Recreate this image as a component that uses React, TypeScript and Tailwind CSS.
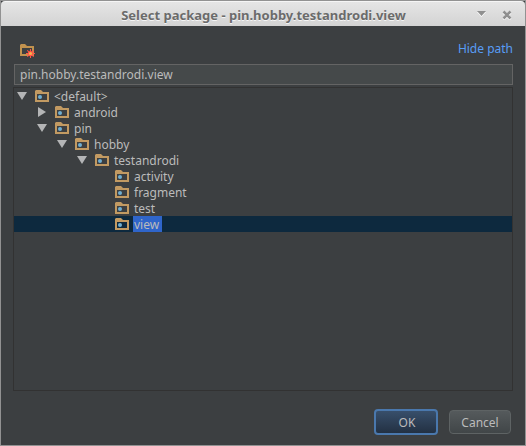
import { useState } from "react";

type PackageNode = { name: string; level: number; state?: "open" | "closed" };

const packages: PackageNode[] = [
  { name: "<default>", level: 0, state: "open" },
  { name: "android", level: 1, state: "closed" },
  { name: "pin", level: 1, state: "open" },
  { name: "hobby", level: 2, state: "open" },
  { name: "testandrodi", level: 3, state: "open" },
  { name: "activity", level: 4 },
  { name: "fragment", level: 4 },
  { name: "test", level: 4 },
  { name: "view", level: 4 },
];

const indents = ["pl-0", "pl-5", "pl-10", "pl-15", "pl-20"];

function PackageIcon() {
  return (
    <svg width="14" height="12" viewBox="0 0 14 12" className="shrink-0" aria-hidden="true">
      <path fillRule="evenodd" fill="#c29a62" d="M0 1 L1 0 H6 L8 2 H14 V12 H0 Z M2 4 V10 H12 V4 Z" />
      <circle cx="5" cy="7" r="2" fill="#6fafd2" />
    </svg>
  );
}

function NewPackageIcon() {
  return (
    <svg width="16" height="14" viewBox="0 0 16 14" aria-hidden="true">
      <path fillRule="evenodd" fill="#c1924e" d="M0 1 L1 0 H5 L7 2 H14 V12 H0 Z M2 4 V10 H12 V4 Z" />
      <path d="M10.5 5 V14 M6 9.5 H15 M7.300 6.300 L13.700 12.700 M13.700 6.300 L7.300 12.700" stroke="#ff5347" strokeWidth="1.100" />
      <circle cx="10.5" cy="9.5" r="2.600" fill="#ff5347" />
      <circle cx="10.5" cy="9.5" r="1.600" fill="#f6b24c" />
    </svg>
  );
}

function Arrow({ open }: { open: boolean }) {
  return (
    <svg width="10" height="10" viewBox="0 0 10 10" aria-hidden="true">
      <path fill="#b4b5b6" d={open ? "M0 1 H10 L5 9 Z" : "M1 0 L9 5 L1 10 Z"} />
    </svg>
  );
}

export default function App() {
  const [path, setPath] = useState("pin.hobby.testandrodi.view");
  const [selected, setSelected] = useState("view");

  return (
    <div className="flex min-h-screen flex-col bg-[#3c3f41] font-['Noto_Sans',sans-serif] text-xs text-[#bbbbbb]">
      <div className="flex min-h-screen flex-col overflow-hidden border border-[#929292] bg-[#3c3f41]">
        <header className="flex h-[25px] items-center rounded-t-sm border-t border-[#f5f5f5] bg-linear-to-b from-[#e5e5e5] to-[#d3d3d3] pt-px pr-[13px] pl-[50px]">
          <h1 className="flex-1 text-center text-[13px] leading-5 font-bold whitespace-nowrap text-[#6b6b6b] [text-shadow:0_1px_0_#f5f5f5]">
            Select package - pin.hobby.testandrodi.view
          </h1>
          <button type="button" aria-label="Shade" className="mr-4">
            <svg width="10" height="10" viewBox="0 0 10 10" aria-hidden="true">
              <path d="M1 2 H10 L5.500 7 Z" fill="#fff" />
              <path d="M1 1 H10 L5.500 6 Z" fill="#8f8f8f" />
            </svg>
          </button>
          <button type="button" aria-label="Close">
            <svg width="10" height="10" viewBox="0 0 10 10" aria-hidden="true">
              <path d="M1.500 2.500 L8.500 9.500 M8.500 2.500 L1.500 9.500" stroke="#fff" strokeWidth="2.500" />
              <path d="M1.500 1.500 L8.500 8.500 M8.500 1.500 L1.500 8.500" stroke="#8f8f8f" strokeWidth="2.500" />
            </svg>
          </button>
        </header>

        <main className="flex flex-1 flex-col px-3 pt-3 pb-[10px]">
          <div className="flex h-[26px] items-start justify-between pl-[7px]">
            <button type="button" aria-label="New package" className="pt-[6px]">
              <NewPackageIcon />
            </button>
            <a href="#path" className="pt-px leading-5 text-[#589df6]">
              Hide path
            </a>
          </div>
          <input
            id="path"
            aria-label="Package path"
            value={path}
            onChange={(e) => setPath(e.target.value)}
            className="ml-px h-[21px] border border-[#646464] bg-[#45494a] px-[5px] leading-4 outline-none"
          />
          <ul role="tree" aria-label="Packages" className="mt-[2px] flex-1 border border-[#323232]">
            {packages.map((p) => {
              const isSelected = p.name === selected;
              return (
                <li
                  key={p.name}
                  role="treeitem"
                  aria-level={p.level + 1}
                  aria-selected={isSelected}
                  aria-expanded={p.state ? p.state === "open" : undefined}
                  onClick={() => setSelected(p.name)}
                  className={isSelected ? "bg-[#0d293e]" : ""}
                >
                  <div className={`flex h-4 items-center ${indents[p.level]}`}>
                    <span className="flex w-[21px] shrink-0 justify-center pr-[5px]">
                      {p.state && <Arrow open={p.state === "open"} />}
                    </span>
                    <PackageIcon />
                    <span className={`ml-1 h-4 px-px pt-px leading-4 ${isSelected ? "bg-[#2f65ca] pr-[3px]" : ""}`}>
                      {p.name}
                    </span>
                  </div>
                </li>
              );
            })}
          </ul>
          <footer className="flex items-center justify-end gap-[11px] pt-[18px] pr-[2px]">
            <button
              type="button"
              className="h-[26px] w-16 rounded-sm border-2 border-[#4a78ad] bg-linear-to-b from-[#384f6b] to-[#233143] pt-px pl-[2px] leading-4"
            >
              OK
            </button>
            <button
              type="button"
              className="h-6 w-[62px] rounded-sm border border-[#5e6364] bg-linear-to-b from-[#555a5c] to-[#414648] pt-px leading-4"
            >
              Cancel
            </button>
          </footer>
        </main>
      </div>
    </div>
  );
}
